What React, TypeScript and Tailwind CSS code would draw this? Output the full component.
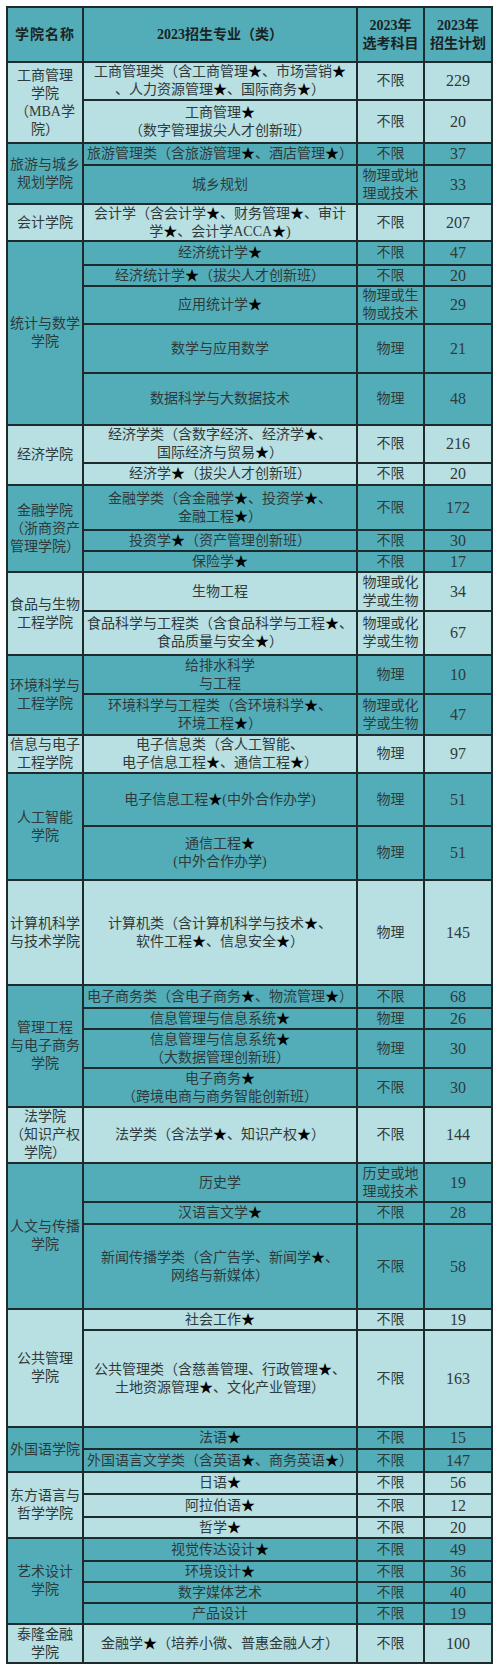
const DARK = "bg-[#53adb8]";
const LIGHT = "bg-[#b8dfe2]";

type Major = { name: string[]; subject: string[]; plan: string };
type College = { name: string[]; majors: Major[] };

const colleges: College[] = [
  {
    name: ["工商管理", "学院", "（MBA学", "院）"],
    majors: [
      { name: ["工商管理类（含工商管理★、市场营销★", "、人力资源管理★、国际商务★）"], subject: ["不限"], plan: "229" },
      { name: ["工商管理★", "（数字管理拔尖人才创新班）"], subject: ["不限"], plan: "20" },
    ],
  },
  {
    name: ["旅游与城乡", "规划学院"],
    majors: [
      { name: ["旅游管理类（含旅游管理★、酒店管理★）"], subject: ["不限"], plan: "37" },
      { name: ["城乡规划"], subject: ["物理或地", "理或技术"], plan: "33" },
    ],
  },
  {
    name: ["会计学院"],
    majors: [
      { name: ["会计学（含会计学★、财务管理★、审计", "学★、会计学ACCA★)"], subject: ["不限"], plan: "207" },
    ],
  },
  {
    name: ["统计与数学", "学院"],
    majors: [
      { name: ["经济统计学★"], subject: ["不限"], plan: "47" },
      { name: ["经济统计学★（拔尖人才创新班）"], subject: ["不限"], plan: "20" },
      { name: ["应用统计学★"], subject: ["物理或生", "物或技术"], plan: "29" },
      { name: ["数学与应用数学"], subject: ["物理"], plan: "21" },
      { name: ["数据科学与大数据技术"], subject: ["物理"], plan: "48" },
    ],
  },
  {
    name: ["经济学院"],
    majors: [
      { name: ["经济学类（含数字经济、经济学★、", "国际经济与贸易★）"], subject: ["不限"], plan: "216" },
      { name: ["经济学★（拔尖人才创新班）"], subject: ["不限"], plan: "20" },
    ],
  },
  {
    name: ["金融学院", "（浙商资产", "管理学院）"],
    majors: [
      { name: ["金融学类（含金融学★、投资学★、", "金融工程★）"], subject: ["不限"], plan: "172" },
      { name: ["投资学★（资产管理创新班）"], subject: ["不限"], plan: "30" },
      { name: ["保险学★"], subject: ["不限"], plan: "17" },
    ],
  },
  {
    name: ["食品与生物", "工程学院"],
    majors: [
      { name: ["生物工程"], subject: ["物理或化", "学或生物"], plan: "34" },
      { name: ["食品科学与工程类（含食品科学与工程★、", "食品质量与安全★）"], subject: ["物理或化", "学或生物"], plan: "67" },
    ],
  },
  {
    name: ["环境科学与", "工程学院"],
    majors: [
      { name: ["给排水科学", "与工程"], subject: ["物理"], plan: "10" },
      { name: ["环境科学与工程类（含环境科学★、", "环境工程★）"], subject: ["物理或化", "学或生物"], plan: "47" },
    ],
  },
  {
    name: ["信息与电子", "工程学院"],
    majors: [
      { name: ["电子信息类（含人工智能、", "电子信息工程★、通信工程★）"], subject: ["物理"], plan: "97" },
    ],
  },
  {
    name: ["人工智能", "学院"],
    majors: [
      { name: ["电子信息工程★(中外合作办学)"], subject: ["物理"], plan: "51" },
      { name: ["通信工程★", "(中外合作办学)"], subject: ["物理"], plan: "51" },
    ],
  },
  {
    name: ["计算机科学", "与技术学院"],
    majors: [
      { name: ["计算机类（含计算机科学与技术★、", "软件工程★、信息安全★）"], subject: ["物理"], plan: "145" },
    ],
  },
  {
    name: ["管理工程", "与电子商务", "学院"],
    majors: [
      { name: ["电子商务类（含电子商务★、物流管理★）"], subject: ["不限"], plan: "68" },
      { name: ["信息管理与信息系统★"], subject: ["物理"], plan: "26" },
      { name: ["信息管理与信息系统★", "（大数据管理创新班）"], subject: ["物理"], plan: "30" },
      { name: ["电子商务★", "（跨境电商与商务智能创新班）"], subject: ["不限"], plan: "30" },
    ],
  },
  {
    name: ["法学院", "（知识产权", "学院）"],
    majors: [{ name: ["法学类（含法学★、知识产权★）"], subject: ["不限"], plan: "144" }],
  },
  {
    name: ["人文与传播", "学院"],
    majors: [
      { name: ["历史学"], subject: ["历史或地", "理或技术"], plan: "19" },
      { name: ["汉语言文学★"], subject: ["不限"], plan: "28" },
      { name: ["新闻传播学类（含广告学、新闻学★、", "网络与新媒体）"], subject: ["不限"], plan: "58" },
    ],
  },
  {
    name: ["公共管理", "学院"],
    majors: [
      { name: ["社会工作★"], subject: ["不限"], plan: "19" },
      { name: ["公共管理类（含慈善管理、行政管理★、", "土地资源管理★、文化产业管理）"], subject: ["不限"], plan: "163" },
    ],
  },
  {
    name: ["外国语学院"],
    majors: [
      { name: ["法语★"], subject: ["不限"], plan: "15" },
      { name: ["外国语言文学类（含英语★、商务英语★）"], subject: ["不限"], plan: "147" },
    ],
  },
  {
    name: ["东方语言与", "哲学学院"],
    majors: [
      { name: ["日语★"], subject: ["不限"], plan: "56" },
      { name: ["阿拉伯语★"], subject: ["不限"], plan: "12" },
      { name: ["哲学★"], subject: ["不限"], plan: "20" },
    ],
  },
  {
    name: ["艺术设计", "学院"],
    majors: [
      { name: ["视觉传达设计★"], subject: ["不限"], plan: "49" },
      { name: ["环境设计★"], subject: ["不限"], plan: "36" },
      { name: ["数字媒体艺术"], subject: ["不限"], plan: "40" },
      { name: ["产品设计"], subject: ["不限"], plan: "19" },
    ],
  },
  {
    name: ["泰隆金融", "学院"],
    majors: [{ name: ["金融学★（培养小微、普惠金融人才）"], subject: ["不限"], plan: "100" }],
  },
];

const spanClass: Record<number, string> = {
  1: "row-span-1",
  2: "row-span-2",
  3: "row-span-3",
  4: "row-span-4",
  5: "row-span-5",
};

// stars are printed darker than the rest of the text
function Line({ text }: { text: string }) {
  const parts = text.split("★");
  return (
    <div className="whitespace-nowrap">
      {parts.map((p, i) => (
        <span key={i}>
          {p}
          {i < parts.length - 1 && <span className="text-black">★</span>}
        </span>
      ))}
    </div>
  );
}

function Cell({ lines, bg, className = "" }: { lines: string[]; bg: string; className?: string }) {
  return (
    <div className={`${bg} flex flex-col items-center justify-center text-center overflow-hidden ${className}`}>
      {lines.map((l, i) => (
        <Line key={i} text={l} />
      ))}
    </div>
  );
}

export default function App() {
  return (
    <div className="min-h-screen bg-white pt-[6px] pl-[6px]">
      <div
        className="grid w-[487px] grid-cols-[74px_272px_65px_66px] grid-rows-[53px_36px_41px_20px_37px_35px_22px_19px_36px_47px_50px_36px_20px_43px_19px_19px_37px_42px_37px_39px_36px_51px_52px_103px_21px_19px_37px_37px_54px_37px_20px_83px_19px_95px_20px_21px_20px_21px_19px_21px_19px_19px_19px_37px] gap-[2px] bg-[#1e2b2d] p-[2px] text-[14px] leading-[18px] text-[#2f3a3b]"
        style={{ fontFamily: '"Liberation Serif", "Noto Sans CJK SC", serif' }}
      >
        {/* header */}
        <Cell lines={["学院名称"]} bg={DARK} className="font-bold text-[#1b2324] tracking-[1px]" />
        <Cell lines={["2023招生专业（类）"]} bg={DARK} className="font-bold text-[#1b2324]" />
        <Cell lines={["2023年", "选考科目"]} bg={DARK} className="font-bold text-[#1b2324]" />
        <Cell lines={["2023年", "招生计划"]} bg={DARK} className="font-bold text-[#1b2324]" />

        {colleges.map((c, ci) => {
          const bg = ci % 2 === 0 ? LIGHT : DARK;
          return [
            <Cell key={`c${ci}`} lines={c.name} bg={bg} className={spanClass[c.majors.length]} />,
            ...c.majors.flatMap((m, mi) => [
              <Cell key={`n${ci}-${mi}`} lines={m.name} bg={bg} />,
              <Cell key={`s${ci}-${mi}`} lines={m.subject} bg={bg} />,
              <Cell key={`p${ci}-${mi}`} lines={[m.plan]} bg={bg} className="text-[16px]" />,
            ]),
          ];
        })}
      </div>
    </div>
  );
}
